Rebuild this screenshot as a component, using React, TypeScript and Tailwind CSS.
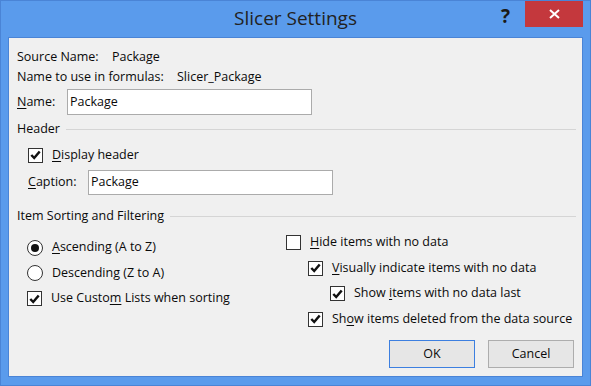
import type { ReactNode } from 'react';

const font = { fontFamily: '"Segoe UI", "Open Sans", "Noto Sans", sans-serif' };

const U = ({ children }: { children: ReactNode }) => <span className="underline underline-offset-2">{children}</span>;

const Check = ({ checked }: { checked: boolean }) => (
  <span className="flex h-[15px] w-[15px] shrink-0 items-center justify-center border border-[#333333] bg-white">
    {checked && (
      <svg width="11" height="10" viewBox="0 0 11 10">
        <path d="M1.3 5 L4.2 8 L9.7 1.5" fill="none" stroke="#111" strokeWidth="2.5" />
      </svg>
    )}
  </span>
);

const Radio = ({ checked }: { checked: boolean }) => (
  <span className="flex h-[16px] w-[16px] shrink-0 items-center justify-center rounded-full border border-[#333333] bg-white">
    {checked && <span className="h-[8px] w-[8px] rounded-full bg-[#111]" />}
  </span>
);

const Row = ({ indent, children, control }: { indent: string; children: ReactNode; control: ReactNode }) => (
  <div className={`flex h-[25.5px] items-center gap-[9px] ${indent}`}>
    {control}
    <span>{children}</span>
  </div>
);

const Section = ({ title }: { title: string }) => (
  <div className="flex h-[20px] items-center gap-[6px] pr-[6px]">
    <span>{title}</span>
    <span className="h-px flex-1 bg-[#d5d5d5]" />
  </div>
);

export default function App() {
  return (
    <div className="flex h-[386px] w-[591px] flex-col border border-[#4a84d6] bg-[#5a9bec] text-[12.5px] text-[#0a0a0a]" style={font}>
      {/* title bar */}
      <div className="relative flex h-[36px] shrink-0 items-center justify-center">
        <span className="pb-[2px] text-[19px] text-[#222]">Slicer Settings</span>
        <span className="absolute left-[500px] top-[1px] text-[19px] font-bold text-[#1a1a1a]">?</span>
        <div className="absolute left-[524px] top-0 flex h-[26px] w-[58px] items-center justify-center bg-[#c4383d]">
          <svg width="11" height="10" viewBox="0 0 11 10">
            <path d="M1 1 L10 9 M10 1 L1 9" stroke="#fff" strokeWidth="2" />
          </svg>
        </div>
      </div>

      {/* body */}
      <div className="mx-[7px] mb-[8px] flex flex-1 flex-col border border-[#4a84d6] bg-[#f0f0f0] pl-[8px] pt-[9px]">
        <div className="flex h-[20px] items-center">
          <span className="w-[95px]">Source Name:</span>
          <span>Package</span>
        </div>
        <div className="flex h-[20px] items-center">
          <span className="w-[160px]">Name to use in formulas:</span>
          <span>Slicer_Package</span>
        </div>
        <div className="mt-[2px] flex h-[26px] items-center">
          <span className="w-[50px]"><U>N</U>ame:</span>
          <div className="flex h-[26px] w-[245px] items-center border border-[#ababab] bg-white pl-[2px]">Package</div>
        </div>
        <div className="mt-[4px]">
          <Section title="Header" />
        </div>
        <div className="mt-[6px] flex h-[20px] items-center gap-[9px] pl-[11px]">
          <Check checked />
          <span><U>D</U>isplay header</span>
        </div>
        <div className="mt-[5px] flex h-[25px] items-center pl-[11px]">
          <span className="w-[60px]"><U>C</U>aption:</span>
          <div className="flex h-[25px] w-[245px] items-center border border-[#ababab] bg-white pl-[2px]">Package</div>
        </div>
        <div className="mt-[11px]">
          <Section title="Item Sorting and Filtering" />
        </div>

        <div className="mt-[4px] flex">
          <div className="w-[269px] pt-[5px]">
            <Row indent="pl-[10px]" control={<Radio checked />}><U>A</U>scending (A to Z)</Row>
            <Row indent="pl-[10px]" control={<Radio checked={false} />}>Descendin<U>g</U> (Z to A)</Row>
            <Row indent="pl-[10px]" control={<Check checked />}>Use Custo<U>m</U> Lists when sorting</Row>
          </div>
          <div className="flex-1">
            <Row indent="pl-0" control={<Check checked={false} />}><U>H</U>ide items with no data</Row>
            <Row indent="pl-[22px]" control={<Check checked />}><U>V</U>isually indicate items with no data</Row>
            <Row indent="pl-[44px]" control={<Check checked />}>Show <U>i</U>tems with no data last</Row>
            <Row indent="pl-[22px]" control={<Check checked />}>Sh<U>o</U>w items deleted from the data source</Row>
          </div>
        </div>

        <div className="mt-[8px] flex justify-end gap-[13px] pr-[8px]">
          <button className="h-[28px] w-[86px] border border-[#3c7fe0] bg-[#e6e6e6]">OK</button>
          <button className="h-[28px] w-[86px] border border-[#adadad] bg-[#e6e6e6]">Cancel</button>
        </div>
      </div>
    </div>
  );
}
